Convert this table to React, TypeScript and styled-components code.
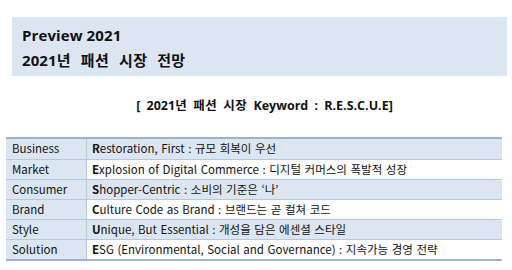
import styled, { createGlobalStyle } from "styled-components";

const GlobalStyle = createGlobalStyle`
  body {
    margin: 0;
    background: #ffffff;
    font-family: "Open Sans", "Noto Sans CJK KR", sans-serif;
    color: #111111;
  }
`;

const Page = styled.div`
  width: 512px;
  height: 270px;
  padding: 17px 5px 0 6px;
  box-sizing: border-box;
  display: flex;
  flex-direction: column;
`;

const TitleBox = styled.div`
  margin: 0 0 0 6px;
  height: 59px;
  background: #dce6f2;
  padding: 6px 10px 0;
  box-sizing: border-box;
  display: flex;
  flex-direction: column;
  gap: 1px;
  .line {
    font-weight: 700;
    font-size: 15px;
    line-height: 24px;
    letter-spacing: 0.1px;
  }
`;

// hangul runs get their own face and spacing, like the original's Korean font
const Ko = styled.span<{ $ws: number; $ls: number }>`
  font-family: "Noto Sans CJK KR", sans-serif;
  word-spacing: ${(p) => p.$ws}px;
  letter-spacing: ${(p) => p.$ls}px;
`;

const Subtitle = styled.div`
  margin-top: 20px;
  text-align: center;
  font-weight: 700;
  font-size: 12.5px;
  line-height: 18px;
  padding-left: 16px;
  word-spacing: 3px;
`;

const Table = styled.div`
  margin-top: 22px;
  width: 496px;
  border-top: 2px solid #9fb3c8;
  border-bottom: 2px solid #9fb3c8;
  font-family: "Noto Sans CJK KR", sans-serif;
`;

const Row = styled.div<{ $shade: boolean }>`
  display: grid;
  grid-template-columns: 81px 1fr;
  height: 20px;
  box-sizing: border-box;
  font-size: 11.5px;
  line-height: 19px;
  & + & {
    border-top: 1px solid #b8c8da;
  }
  .label {
    background: #dce6f2;
    border-right: 1px solid #b8c8da;
    padding-left: 6px;
  }
  .content {
    background: ${(p) => (p.$shade ? "#dce6f2" : "#ffffff")};
    padding-left: 5px;
    white-space: nowrap;
    word-spacing: 1px;
    b {
      font-weight: 700;
    }
  }
`;

function hangul(text: string, ws: number, ls: number) {
  return text.split(/([가-힣‘’][가-힣‘’ ]*[가-힣‘’]|[가-힣])/).map((part, i) =>
    /[가-힣]/.test(part) ? (
      <Ko $ws={ws} $ls={ls} key={i}>
        {part}
      </Ko>
    ) : (
      part
    )
  );
}

const rows = [
  { label: "Business", first: "R", rest: "estoration, First : 규모 회복이 우선" },
  { label: "Market", first: "E", rest: "xplosion of Digital Commerce : 디지털 커머스의 폭발적 성장" },
  { label: "Consumer", first: "S", rest: "hopper-Centric : 소비의 기준은 ‘나’" },
  { label: "Brand", first: "C", rest: "ulture Code as Brand : 브랜드는 곧 컬쳐 코드" },
  { label: "Style", first: "U", rest: "nique, But Essential : 개성을 담은 에센셜 스타일" },
  { label: "Solution", first: "E", rest: "SG (Environmental, Social and Governance) : 지속가능 경영 전략" },
];

export default function App() {
  return (
    <>
      <GlobalStyle />
      <Page>
        <TitleBox>
          <div className="line">Preview 2021</div>
          <div className="line">2021{hangul("년 패션 시장 전망", 6, 0.4)}</div>
        </TitleBox>
        <Subtitle>[ 2021{hangul("년 패션 시장", 3, 0.4)} Keyword : R.E.S.C.U.E]</Subtitle>
        <Table>
          {rows.map((r, i) => (
            <Row $shade={i % 2 === 0} key={r.label}>
              <div className="label">{r.label}</div>
              <div className="content">
                <b>{r.first}</b>
                {r.rest}
              </div>
            </Row>
          ))}
        </Table>
      </Page>
    </>
  );
}
